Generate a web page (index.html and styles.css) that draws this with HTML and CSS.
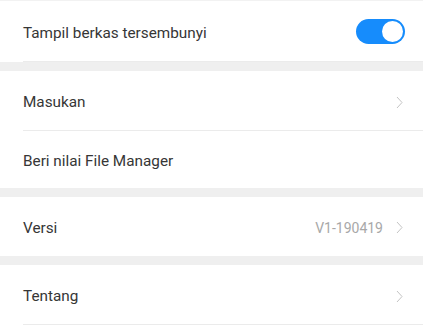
FILE: index.html
```html
<!DOCTYPE html>
<html>
<head>
<meta charset="utf-8">
<link rel="stylesheet" href="styles.css">
</head>
<body>
<div class="page">
  <div class="group first">
    <div class="row sep">
      <span class="label">Tampil berkas tersembunyi</span>
      <span class="toggle"><span class="knob"></span></span>
    </div>
  </div>
  <div class="band"></div>
  <div class="group">
    <div class="row sep">
      <span class="label">Masukan</span>
      <svg class="chev" width="7" height="13" viewBox="0 0 7 13"><path d="M1 1 L6 6.5 L1 12" fill="none" stroke="#c4c4c4" stroke-width="1"/></svg>
    </div>
    <div class="row short">
      <span class="label">Beri nilai File Manager</span>
    </div>
  </div>
  <div class="band"></div>
  <div class="group">
    <div class="row">
      <span class="label">Versi</span>
      <span class="right"><span class="value">V1-190419</span><svg class="chev" width="7" height="13" viewBox="0 0 7 13"><path d="M1 1 L6 6.5 L1 12" fill="none" stroke="#c4c4c4" stroke-width="1"/></svg></span>
    </div>
  </div>
  <div class="band"></div>
  <div class="group">
    <div class="row sep">
      <span class="label">Tentang</span>
      <svg class="chev" width="7" height="13" viewBox="0 0 7 13"><path d="M1 1 L6 6.5 L1 12" fill="none" stroke="#c4c4c4" stroke-width="1"/></svg>
    </div>
  </div>
</div>
</body>
</html>
```

FILE: styles.css
```css
html, body {
  margin: 0;
  padding: 0;
  background: #ffffff;
}
.page {
  width: 423px;
  font-family: Roboto, "Noto Sans", sans-serif;
}
.group {
  background: #ffffff;
}
.group.first {
  border-top: 1px solid #f2f2f2;
}
.row {
  display: flex;
  align-items: center;
  justify-content: space-between;
  height: 59px;
  padding: 2px 20px 0 23px;
  box-sizing: border-box;
  position: relative;
}
.row.sep {
  height: 60px;
}
.row.sep::after {
  content: "";
  position: absolute;
  left: 23px;
  right: 0;
  bottom: 0;
  height: 1px;
  background: #ebebeb;
}
.row.short {
  height: 57px;
}
.first .row {
  height: 61px;
}
.label {
  font-size: 15.3px;
  color: #363636;
}
.band {
  height: 9px;
  background: #efefef;
}
.toggle {
  width: 49px;
  height: 25px;
  border-radius: 13px;
  background: #168cfc;
  display: flex;
  align-items: center;
  justify-content: flex-end;
  padding: 0 2px;
  box-sizing: border-box;
  margin-right: -2px;
  margin-top: -2px;
}
.knob {
  width: 21px;
  height: 21px;
  border-radius: 50%;
  background: #ffffff;
}
.right {
  display: flex;
  align-items: center;
  gap: 13px;
}
.value {
  font-size: 14px;
  color: #a8a8a8;
}
.chev {
  display: block;
}
```
